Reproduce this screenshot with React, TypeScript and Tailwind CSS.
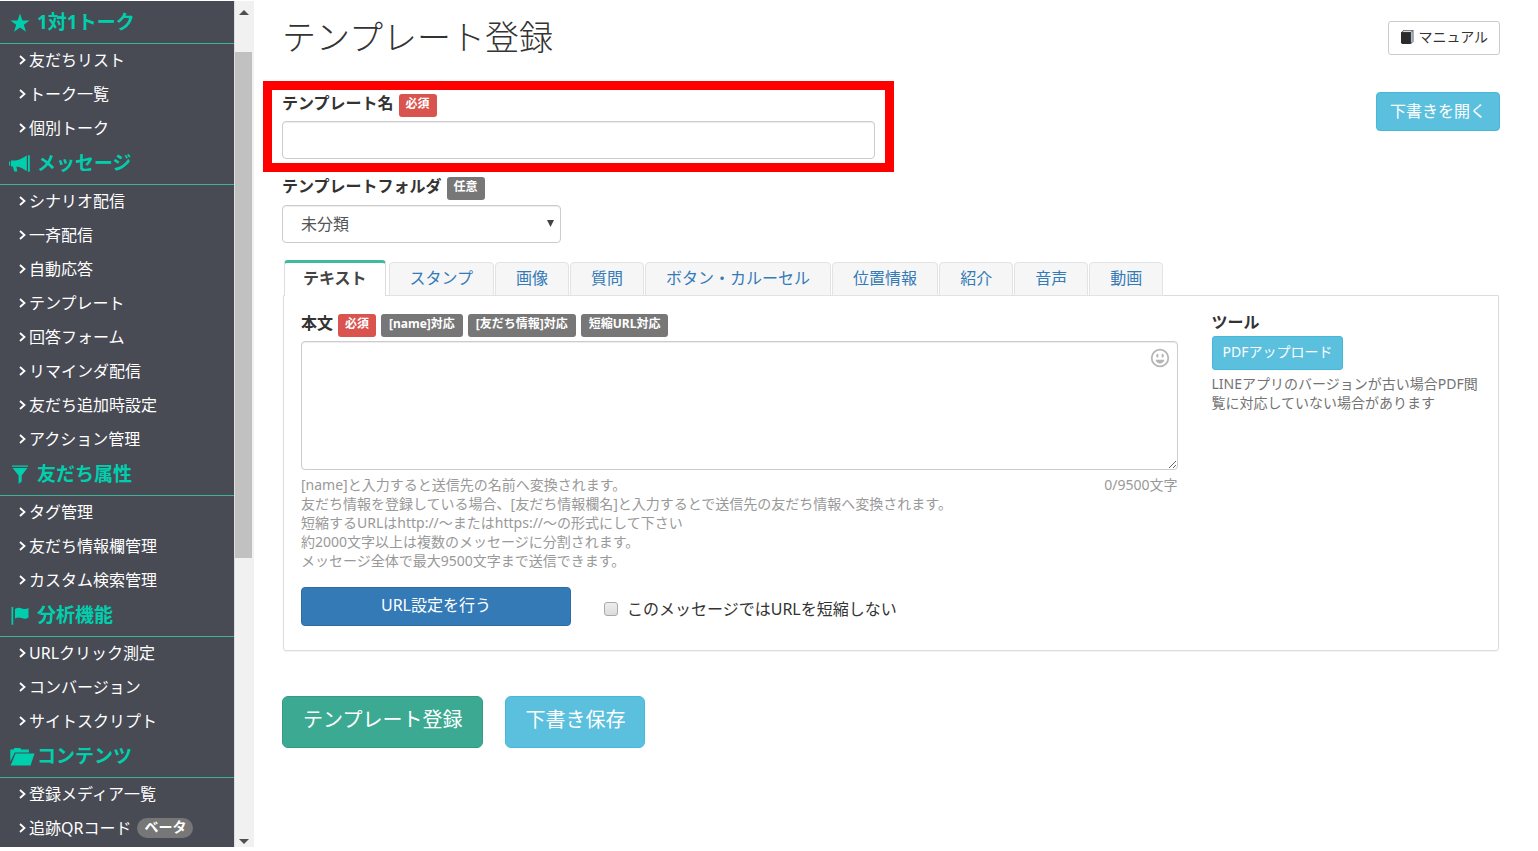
import { useState } from "react";
import type { ReactNode } from "react";
import clsx from "clsx";

type IconName = "star" | "bullhorn" | "filter" | "flag" | "folder";

interface MenuSection {
  title: string;
  icon: IconName;
  items: { label: string; badge?: string }[];
}

const MENU: MenuSection[] = [
  {
    title: "1対1トーク",
    icon: "star",
    items: [{ label: "友だちリスト" }, { label: "トーク一覧" }, { label: "個別トーク" }],
  },
  {
    title: "メッセージ",
    icon: "bullhorn",
    items: [
      { label: "シナリオ配信" },
      { label: "一斉配信" },
      { label: "自動応答" },
      { label: "テンプレート" },
      { label: "回答フォーム" },
      { label: "リマインダ配信" },
      { label: "友だち追加時設定" },
      { label: "アクション管理" },
    ],
  },
  {
    title: "友だち属性",
    icon: "filter",
    items: [{ label: "タグ管理" }, { label: "友だち情報欄管理" }, { label: "カスタム検索管理" }],
  },
  {
    title: "分析機能",
    icon: "flag",
    items: [{ label: "URLクリック測定" }, { label: "コンバージョン" }, { label: "サイトスクリプト" }],
  },
  {
    title: "コンテンツ",
    icon: "folder",
    items: [{ label: "登録メディア一覧" }, { label: "追跡QRコード", badge: "ベータ" }],
  },
];

const TABS = ["テキスト", "スタンプ", "画像", "質問", "ボタン・カルーセル", "位置情報", "紹介", "音声", "動画"];

const MAX_LENGTH = 9500;

function SectionIcon({ name }: { name: IconName }) {
  switch (name) {
    case "star":
      return (
        <svg width="20" height="20" viewBox="0 0 20 20" fill="currentColor" aria-hidden="true">
          <path d="M10 0.5l2.4 6.9h7.2l-5.8 4.3 2.2 7-6-4.2-6 4.2 2.2-7L0.4 7.4h7.2z" />
        </svg>
      );
    case "bullhorn":
      return (
        <svg width="22" height="20" viewBox="0 0 22 20" fill="currentColor" className="-ml-px" aria-hidden="true">
          <path d="M0 7.4h1.2v4H0zM2 6.6h4.5C10 6.2 14 4.300 17.800 1.600v15.600C14.500 14.800 11 13 7.400 12.600l.9 4.800H5.200L4 12.400H2zM19 1.200h1.800v16.600H19z" />
        </svg>
      );
    case "filter":
      return (
        <svg width="20" height="20" viewBox="0 0 20 20" fill="currentColor" aria-hidden="true">
          <path d="M2 .5h16v1.300H2zM2.600 3h14.800L11.700 10.500v6L8.600 19v-8.500z" />
        </svg>
      );
    case "flag":
      return (
        <svg width="20" height="20" viewBox="0 0 20 20" fill="currentColor" aria-hidden="true">
          <path d="M1.500 1h1.700v17.800H1.500zM5 3c2.200-1.700 4.500-1.700 7-.6 2.200 1 4.300 1 6.500-.4v9.400c-2 1.600-4.400 1.700-6.800.7-2.300-1-4.500-1-6.700.5z" />
        </svg>
      );
    case "folder":
      return (
        <svg width="26" height="20" viewBox="0 0 26 20" fill="currentColor" aria-hidden="true">
          <path d="M.3 14.500V2.500h3.200l.8-1.500h6l.8 1.500h7.800v3H4.800zM5.600 6.600h18.900l-4 12H.6z" />
        </svg>
      );
  }
}

function Sidebar() {
  return (
    <aside className="flex w-[254px] shrink-0 bg-[#f1f1f1]">
      <nav className="min-w-0 flex-1 overflow-hidden bg-[#484a54] pt-1">
        {MENU.map((section) => (
          <section key={section.title}>
            <h2 className="flex h-[39px] items-center border-b border-[#3fb39a] pb-[3px] pl-[10px] text-[19px] font-bold text-[#00cfae]">
              <span className="w-[27px] shrink-0">
                <SectionIcon name={section.icon} />
              </span>
              {section.title}
            </h2>
            <ul>
              {section.items.map((item) => (
                <li key={item.label}>
                  <a href="#" className="flex h-[34px] items-center pb-[3px] pl-[19px] text-base text-white">
                    <svg width="10" height="10" viewBox="0 0 10 10" fill="none" stroke="currentColor" strokeWidth="1.800" aria-hidden="true">
                      <path d="M1 1l4.500 4L1 9" />
                    </svg>
                    {item.label}
                    {item.badge && (
                      <span className="ml-[6px] h-5 rounded-full bg-[#777] px-[7px] text-[14px] leading-[18px] font-bold">
                        {item.badge}
                      </span>
                    )}
                  </a>
                </li>
              ))}
            </ul>
          </section>
        ))}
      </nav>
      <div className="flex w-[20px] flex-col border-l border-[#ddd] pr-[2px]" aria-hidden="true">
        <Arrow d="M0 5L5 0l5 5z" />
        <div className="flex-1 pt-[34px]">
          <div className="h-[65%] bg-[#c1c1c1]" />
        </div>
        <Arrow d="M0 0h10L5 5z" />
      </div>
    </aside>
  );
}

function Arrow({ d }: { d: string }) {
  return (
    <div className="flex h-[17px] items-end justify-center pb-[3px]">
      <svg width="10" height="5" viewBox="0 0 10 5" fill="#505050">
        <path d={d} />
      </svg>
    </div>
  );
}

interface BadgeProps {
  required?: boolean;
  wide?: boolean;
  children: ReactNode;
}

function Badge({ required, wide, children }: BadgeProps) {
  return (
    <span
      className={clsx(
        "h-[23px] rounded-[3px] text-xs leading-[20px] font-bold text-white",
        wide ? "px-2" : "px-[7px]",
        required ? "bg-[#d9534f]" : "bg-[#777]"
      )}
    >
      {children}
    </span>
  );
}

function SmileIcon() {
  return (
    <svg width="20" height="20" viewBox="0 0 20 20" fill="none" aria-hidden="true">
      <circle cx="10" cy="10" r="8.300" stroke="#b5b5b5" strokeWidth="1.800" />
      <ellipse cx="7.400" cy="7.700" rx="1.100" ry="1.900" fill="#b5b5b5" />
      <ellipse cx="12.600" cy="7.700" rx="1.100" ry="1.900" fill="#b5b5b5" />
      <path d="M5.400 11.800h9.200c-.8 2.400-2.500 3.600-4.600 3.600s-3.800-1.200-4.600-3.600z" fill="#b5b5b5" />
    </svg>
  );
}

function BookIcon() {
  return (
    <svg width="14" height="16" viewBox="0 0 14 16" aria-hidden="true">
      <path d="M1 3.500L3.500 1H13.500v11.500L11 15z" fill="#54616b" />
      <path d="M2.500 3L4 1.800h8.400L10.800 3z" fill="#d5dde2" />
      <path d="M11.200 3.500l1.400-1.400v10.200l-1.400 1.400z" fill="#c3d3de" />
      <path d="M1 3.300h9.800V15H2.200L1 14z" fill="#2b2b2b" />
    </svg>
  );
}

function MessagePanel() {
  const [body, setBody] = useState("");

  return (
    <div className="mx-px grid grid-cols-[3fr_1fr] rounded-b-[3px] border border-[#ddd] pt-[13px] pb-6 shadow-[0_1px_1px_rgba(0,0,0,0.05)]">
      <div className="min-w-0 px-[17px]">
        <div className="flex h-8 items-center gap-[5px]">
          <label htmlFor="body" className="pb-1 font-bold">
            本文
          </label>
          <Badge required>必須</Badge>
          <Badge wide>[name]対応</Badge>
          <Badge wide>[友だち情報]対応</Badge>
          <Badge wide>短縮URL対応</Badge>
        </div>
        <div className="relative">
          <textarea
            id="body"
            value={body}
            onChange={(e) => setBody(e.target.value)}
            className="block h-[129px] w-full rounded-[4px] border border-[#ccc] px-5 py-2 shadow-[inset_0_1px_1px_rgba(0,0,0,0.075)]"
          />
          <button type="button" aria-label="絵文字" className="absolute top-[7px] right-2">
            <SmileIcon />
          </button>
        </div>
        <div className="mt-[5px] flex justify-between text-sm leading-[19px] text-[#999]">
          <p>
            [name]と入力すると送信先の名前へ変換されます。
            <br />
            友だち情報を登録している場合、[友だち情報欄名]と入力するとで送信先の友だち情報へ変換されます。
            <br />
            短縮するURLはhttp://～またはhttps://～の形式にして下さい
            <br />
            約2000文字以上は複数のメッセージに分割されます。
            <br />
            メッセージ全体で最大9500文字まで送信できます。
          </p>
          <p>
            {body.length}/{MAX_LENGTH}文字
          </p>
        </div>
        <div className="mt-[17px] flex items-center">
          <button
            type="button"
            className="h-[39px] w-[270px] rounded-[4px] border border-[#2e6da4] bg-[#337ab7] pb-1 text-white"
          >
            URL設定を行う
          </button>
          <label className="ml-[33px] flex items-center gap-[9px] pt-1">
            <input
              type="checkbox"
              className="size-[14px] appearance-none rounded-[3px] border border-[#a9a9a9] bg-linear-to-b from-[#eee] to-[#dcdcdc] checked:from-[#337ab7] checked:to-[#337ab7]"
            />
            このメッセージではURLを短縮しない
          </label>
        </div>
      </div>
      <div className="min-w-0 px-[17px]">
        <h3 className="leading-[27px] font-bold">ツール</h3>
        <button
          type="button"
          className="h-[34px] rounded-[3px] border border-[#46b8da] bg-[#5bc0de] px-[10px] pb-[2px] text-sm text-white"
        >
          PDFアップロード
        </button>
        <p className="mt-1 text-sm leading-[19px] text-[#737373]">
          LINEアプリのバージョンが古い場合PDF閲覧に対応していない場合があります
        </p>
      </div>
    </div>
  );
}

export default function App() {
  const [name, setName] = useState("");
  const [tab, setTab] = useState(TABS[0]);

  return (
    <div className="flex h-screen overflow-hidden bg-white pt-[1px] pb-1 font-['Noto_Sans','Noto_Sans_CJK_JP',sans-serif] text-base text-[#333]">
      <Sidebar />
      <main className="min-w-0 flex-1 pt-[14px] pr-[38px] pl-[9px]">
        <header className="flex items-start justify-between pl-[19px]">
          <h1 className="text-[34px] leading-[44px] font-light">テンプレート登録</h1>
          <button
            type="button"
            className="mt-[6px] flex h-[34px] items-center gap-1 rounded-[3px] border border-[#ccc] px-[11px] pb-[2px] text-sm"
          >
            <BookIcon />
            マニュアル
          </button>
        </header>

        <div className="mt-[22px] flex items-start justify-between">
          <div className="w-[51%] border-[9px] border-[#ff0000] px-[10px] pb-1">
            <div className="flex h-[31px] items-center gap-[5px]">
              <label htmlFor="name" className="pb-[5px] font-bold">
                テンプレート名
              </label>
              <Badge required>必須</Badge>
            </div>
            <input
              id="name"
              type="text"
              value={name}
              onChange={(e) => setName(e.target.value)}
              className="block h-[38px] w-full rounded-[4px] border border-[#ccc] px-5 shadow-[inset_0_1px_1px_rgba(0,0,0,0.075)]"
            />
          </div>
          <button
            type="button"
            className="mt-[11px] h-[39px] rounded-[4px] border border-[#46b8da] bg-[#5bc0de] px-[13px] pb-[2px] text-white"
          >
            下書きを開く
          </button>
        </div>

        <div className="pl-[19px]">
          <div className="flex h-[33px] items-center gap-[5px]">
            <label htmlFor="folder" className="pb-[5px] font-bold">
              テンプレートフォルダ
            </label>
            <Badge>任意</Badge>
          </div>
          <div className="relative w-[279px]">
            <select
              id="folder"
              className="block h-[38px] w-full appearance-none rounded-[4px] border border-[#ccc] bg-white px-[18px] text-[#555] shadow-[inset_0_1px_1px_rgba(0,0,0,0.075)]"
            >
              <option>未分類</option>
            </select>
            <svg
              width="7"
              height="7"
              viewBox="0 0 7 7"
              fill="#444"
              className="pointer-events-none absolute top-[15px] right-[7px]"
              aria-hidden="true"
            >
              <path d="M0 0h7L3.500 7z" />
            </svg>
          </div>

          <div role="tablist" className="relative mt-[17px] -mb-px ml-[2px] flex items-end gap-px">
            {TABS.map((label) => (
              <button
                key={label}
                type="button"
                role="tab"
                aria-selected={tab === label}
                onClick={() => setTab(label)}
                className={clsx(
                  "rounded-t-[4px] whitespace-nowrap",
                  tab === label
                    ? "mr-[2px] h-9 border-x border-t-[3px] border-[#ddd] border-t-[#3fb99f] bg-white px-[18px] pb-1 font-bold text-[#444]"
                    : "h-[34px] border border-[#e3e3e3] bg-[#f6f6f6] px-5 pb-[2px] text-[#337ab7]"
                )}
              >
                {label}
              </button>
            ))}
          </div>
          <MessagePanel />

          <div className="mt-[45px] flex gap-[22px]">
            <button
              type="submit"
              className="h-[52px] rounded-[6px] border border-[#359a83] bg-[#3caa92] px-5 pb-1 text-xl text-white"
            >
              テンプレート登録
            </button>
            <button
              type="button"
              className="h-[52px] rounded-[6px] border border-[#46b8da] bg-[#5bc0de] px-[19px] pb-1 text-xl text-white"
            >
              下書き保存
            </button>
          </div>
        </div>
      </main>
    </div>
  );
}
